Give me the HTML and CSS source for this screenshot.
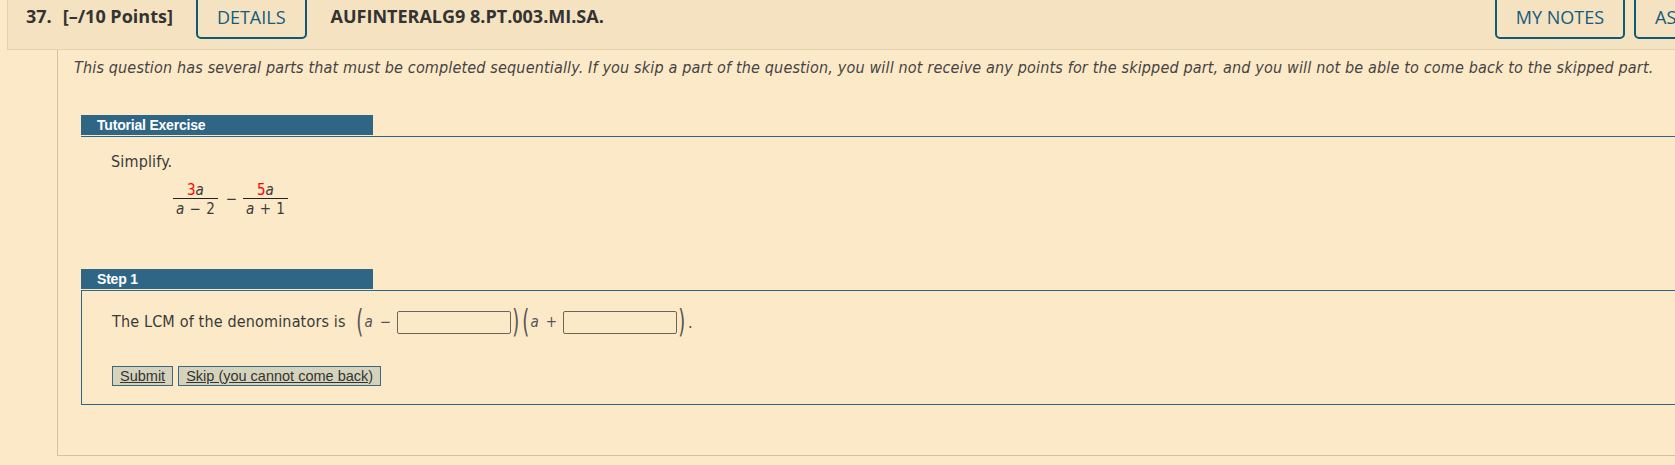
FILE: index.html
```html
<!DOCTYPE html>
<html lang="en">
<head>
<meta charset="utf-8">
<title>Question 37</title>
<link rel="stylesheet" href="styles.css">
</head>
<body>
<div class="question">
  <div class="q-head">
    <span class="q-num">37.</span>
    <span class="q-points">[–/10 Points]</span>
    <button class="hbtn">DETAILS</button>
    <span class="q-code">AUFINTERALG9 8.PT.003.MI.SA.</span>
    <button class="hbtn hbtn-notes">MY NOTES</button>
    <button class="hbtn">ASK YOUR TEACHER</button>
  </div>
  <div class="q-body">
    <p class="intro">This question has several parts that must be completed sequentially. If you skip a part of the question, you will not receive any points for the skipped part, and you will not be able to come back to the skipped part.</p>

    <div class="section">
      <div class="bar">Tutorial Exercise</div>
      <div class="tut-content">
        <p class="txt">Simplify.</p>
        <div class="expr">
          <span class="frac">
            <span class="num"><span class="red">3</span><i>a</i></span>
            <span class="den"><i>a</i> − 2</span>
          </span>
          <span class="op">−</span>
          <span class="frac">
            <span class="num"><span class="red">5</span><i>a</i></span>
            <span class="den"><i>a</i> + 1</span>
          </span>
        </div>
      </div>
    </div>

    <div class="section step">
      <div class="bar">Step 1</div>
      <div class="step-box">
        <div class="lcm-row">
          <span class="txt">The LCM of the denominators is</span>
          <span class="paren lp">(</span>
          <i class="mv">a</i>
          <span class="mop">−</span>
          <input class="ans" type="text">
          <span class="paren rp">)</span>
          <span class="paren lp lp2">(</span>
          <i class="mv">a</i>
          <span class="mop">+</span>
          <input class="ans" type="text">
          <span class="paren rp">)</span>
          <span class="dot">.</span>
        </div>
        <div class="actions">
          <button class="sbtn">Submit</button>
          <button class="sbtn">Skip (you cannot come back)</button>
        </div>
      </div>
    </div>
  </div>
</div>
</body>
</html>
```

FILE: styles.css
```css
html, body {
  margin: 0;
  padding: 0;
}
body {
  background: #fce9c7;
  overflow: hidden;
  width: 1675px;
  height: 465px;
  font-family: "DejaVu Sans Condensed", "DejaVu Sans", sans-serif;
  color: #3a3a3a;
}

.question {
  margin-left: 7px;
  width: 1900px;
}

/* header */
.q-head {
  box-sizing: border-box;
  margin-top: -11px;
  height: 61px;
  background: #f5e2c1;
  border: 1px solid #e2d0ae;
  display: flex;
  align-items: flex-start;
  padding-left: 18px;
  padding-right: 63px;
  font-family: "Open Sans", sans-serif;
  font-size: 18px;
}
.q-num, .q-points, .q-code {
  margin-top: 14px;
  line-height: 24px;
  font-weight: 700;
  color: #333;
}
.q-points {
  margin-left: 11px;
}
.hbtn {
  box-sizing: border-box;
  margin: 0 0 0 23px;
  height: 49px;
  padding: 12px 19px 8px;
  border: 2px solid #0e5a78;
  border-radius: 5px;
  background: transparent;
  font-family: "Open Sans", sans-serif;
  font-size: 18px;
  line-height: 24px;
  color: #135c7c;
  white-space: nowrap;
}
.q-code {
  margin-left: 24px;
}
.hbtn-notes {
  margin-left: auto;
}
.hbtn-notes + .hbtn {
  margin-left: 9px;
}

/* body */
.q-body {
  margin-left: 50px;
  border-left: 1px solid #d3c3a2;
  border-bottom: 1px solid #d3c3a2;
  padding: 8px 0 50px;
}
.intro {
  margin: 0 0 0 16px;
  font-style: italic;
  font-size: 16px;
  line-height: 20px;
  letter-spacing: 0.16px;
  color: #444;
}
.section {
  margin: 37px 0 0 23px;
}
.bar {
  box-sizing: border-box;
  width: 292px;
  height: 20px;
  padding-left: 16px;
  background: #2f6686;
  color: #fff;
  font-family: "Liberation Sans", Arial, sans-serif;
  font-weight: 700;
  font-size: 14px;
  line-height: 21px;
  letter-spacing: -0.2px;
}
.tut-content {
  margin-top: 1px;
  border-top: 1px solid #2f6686;
  padding: 15px 0 0 30px;
}
.txt {
  margin: 0;
  font-size: 16px;
  line-height: 20px;
  letter-spacing: 0.16px;
  color: #3a3a3a;
}
.expr {
  display: flex;
  align-items: center;
  margin: 10px 0 0 62px;
  font-size: 15px;
  color: #3a3a3a;
}
.frac {
  display: inline-flex;
  flex-direction: column;
  align-items: stretch;
  text-align: center;
}
.num {
  line-height: 16px;
  padding: 0 2px;
  border-bottom: 1px solid #222;
}
.den {
  padding: 2px 3px 0;
  line-height: 16px;
  word-spacing: 1px;
}
.red {
  color: #f00;
}
.op {
  margin: 0 6px 0 8px;
  position: relative;
  top: -1px;
}

/* step */
.step {
  margin-top: 52px;
}
.step-box {
  margin-top: 1px;
  border: 1px solid #2f6686;
  padding: 14px 0 18px 30px;
}
.lcm-row {
  display: flex;
  align-items: center;
  height: 34px;
  font-size: 16px;
}
.lcm-row .txt {
  margin-right: 9px;
}
.paren {
  display: inline-block;
  font-family: "DejaVu Sans", sans-serif;
  font-size: 25px;
  font-weight: 400;
  line-height: 34px;
  color: #555;
  transform: scale(0.72, 1.3);
}
.mv {
  font-size: 15px;
  color: #555;
}
.mop {
  font-size: 15px;
  margin: 0 6px 0 7px;
  color: #555;
}
.ans {
  box-sizing: border-box;
  width: 114px;
  height: 23px;
  margin: 0;
  padding: 0;
  border: 1px solid #6f6556;
  border-radius: 2px;
  background: transparent;
}
.dot {
  margin-left: 1px;
  color: #444;
}
.actions {
  display: flex;
  gap: 5px;
  margin-top: 27px;
}
.sbtn {
  box-sizing: border-box;
  height: 20px;
  margin: 0;
  padding: 0 7px;
  border: 1px solid #3a6883;
  background: #d6d3bc;
  font-family: "Liberation Sans", Arial, sans-serif;
  font-size: 14.5px;
  line-height: 17px;
  color: #333;
  text-decoration: underline;
}
```
